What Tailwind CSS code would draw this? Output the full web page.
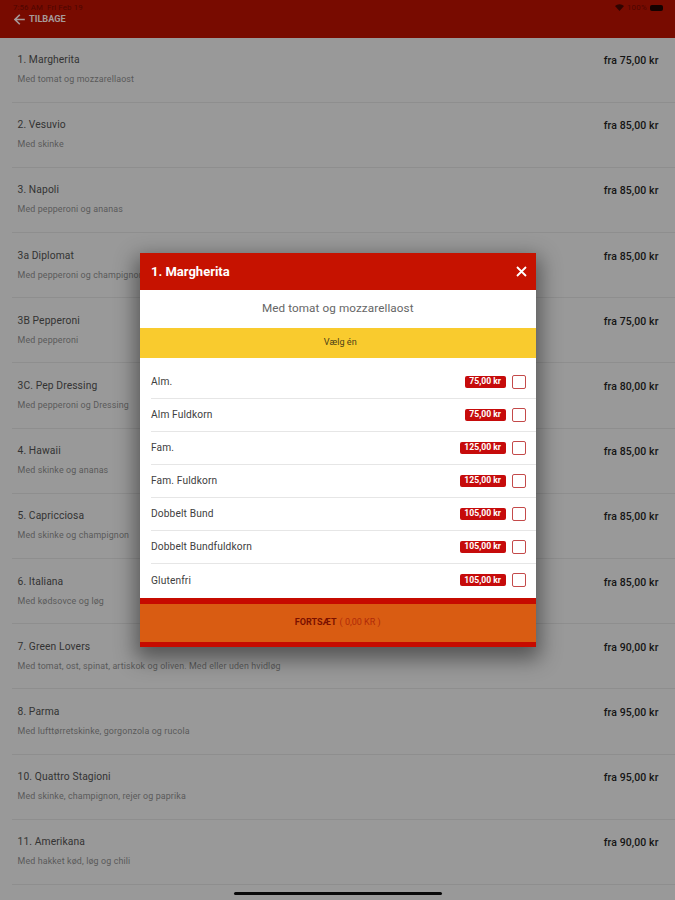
<!DOCTYPE html>
<html lang="da">
<head>
  <meta charset="UTF-8" />
  <meta name="viewport" content="width=device-width, initial-scale=1.0"/>
  <title>Menu - Margherita</title>
  <script src="https://cdn.jsdelivr.net/npm/@tailwindcss/browser@4"></script>
</head>
<body class="relative h-screen overflow-hidden bg-[#999999] font-[Roboto,sans-serif]">

  <header class="h-[37.5px] bg-[#780b00] pt-[3px]">
    <div class="flex h-[10px] items-center justify-between pl-[13px] pr-[12px] text-[7.8px] leading-none text-[#4d0600]">
      <span class="whitespace-pre tracking-[0.15px]">7:56 AM  Fri Feb 19</span>
      <div class="flex items-center gap-[3px]">
        <svg class="h-[7px] w-[9px]" viewBox="0 0 18 14" fill="#300400"><path d="M0 4a13 13 0 0 1 18 0L9 14z"/></svg>
        <span class="tracking-[0.3px]">100%</span>
        <span class="h-[6px] w-[13px] rounded-[2px] bg-[#140200]"></span>
      </div>
    </div>
    <button class="ml-[14px] flex h-[12px] items-center gap-[4px] text-[9.2px] font-bold leading-none text-[#a69a99]">
      <svg class="h-[11px] w-[11px]" viewBox="0 0 11 11" fill="none" stroke="currentColor" stroke-width="1.6"><path d="M10.8 5.5H1.2M5.8.7L1 5.5l4.8 4.8"/></svg>
      TILBAGE
    </button>
  </header>

  <main id="menu"></main>

  <div class="absolute left-[140px] top-[253px] flex h-[394px] w-[395.5px] flex-col bg-white shadow-[0_8px_20px_4px_rgba(0,0,0,0.45)]">
    <div class="flex h-[36.5px] shrink-0 items-center justify-between bg-[#c61200] pl-[11px] pr-[9px] text-white">
      <h2 class="text-[13px] font-bold">1. Margherita</h2>
      <svg class="h-[11px] w-[11px]" viewBox="0 0 11 11" fill="none" stroke="currentColor" stroke-width="1.8"><path d="M1 1l9 9M10 1l-9 9"/></svg>
    </div>
    <p class="flex h-[38px] shrink-0 items-center justify-center pt-[1px] text-[11.7px] tracking-[0.1px] text-[#666666]">Med tomat og mozzarellaost</p>
    <p class="flex h-[30px] shrink-0 items-center justify-center bg-[#f9cb2e] pl-[5px] text-[9.1px] text-[#4d4219]">Vælg én</p>
    <div id="options" class="min-h-0 flex-1 pl-[11px] pt-[8px]"></div>
    <button class="flex h-[49px] shrink-0 items-center justify-center gap-[3px] border-t-[6px] border-b-[5px] border-[#c60b00] bg-[#d95c12] text-[9px] text-[#b02a08]">
      <span class="font-bold text-[#7a1000]">FORTSÆT</span>
      <span>( 0,00 KR )</span>
    </button>
  </div>

  <div class="absolute bottom-[5px] left-[234px] h-[3.5px] w-[208px] rounded-full bg-[#080808]"></div>

  <script>
    const dishes = [
      ["1. Margherita", "Med tomat og mozzarellaost", "75,00"],
      ["2. Vesuvio", "Med skinke", "85,00"],
      ["3. Napoli", "Med pepperoni og ananas", "85,00"],
      ["3a Diplomat", "Med pepperoni og champignon", "85,00"],
      ["3B Pepperoni", "Med pepperoni", "75,00"],
      ["3C. Pep Dressing", "Med pepperoni og Dressing", "80,00"],
      ["4. Hawaii", "Med skinke og ananas", "85,00"],
      ["5. Capricciosa", "Med skinke og champignon", "85,00"],
      ["6. Italiana", "Med kødsovce og løg", "85,00"],
      ["7. Green Lovers", "Med tomat, ost, spinat, artiskok og oliven. Med eller uden hvidløg", "90,00"],
      ["8. Parma", "Med lufttørretskinke, gorgonzola og rucola", "95,00"],
      ["10. Quattro Stagioni", "Med skinke, champignon, rejer og paprika", "95,00"],
      ["11. Amerikana", "Med hakket kød, løg og chili", "90,00"]
    ];

    const sizes = [
      ["Alm.", "75,00"],
      ["Alm Fuldkorn", "75,00"],
      ["Fam.", "125,00"],
      ["Fam. Fuldkorn", "125,00"],
      ["Dobbelt Bund", "105,00"],
      ["Dobbelt Bundfuldkorn", "105,00"],
      ["Glutenfri", "105,00"]
    ];

    document.getElementById("menu").innerHTML = dishes.map(([name, text, price]) => `
      <div class="ml-[12px] flex h-[65.2px] justify-between border-b border-[#8e8e8e] pl-[5.5px] pr-[16.5px] pt-[15.5px]">
        <div>
          <h3 class="text-[10.3px] leading-[14px] tracking-[0.1px] text-[#333333]">${name}</h3>
          <p class="mt-[6px] text-[8.9px] leading-[12px] tracking-[0.13px] text-[#595959]">${text}</p>
        </div>
        <span class="pt-[1px] text-[10.5px] font-medium leading-[14px] tracking-[0.1px] text-[#141414]">fra ${price} kr</span>
      </div>`).join("");

    document.getElementById("options").innerHTML = sizes.map(([name, price]) => `
      <label class="flex h-[33px] items-center border-b border-[#e6e6e6] pr-[10px] text-[10.2px] text-[#404040] last:border-b-0">
        <span class="flex-1 pt-[1px] tracking-[0.13px]">${name}</span>
        <span class="mr-[6px] flex h-[12px] items-center rounded-[2px] bg-[#c60b0b] px-[4.5px] text-[8.6px] font-bold text-white">${price} kr</span>
        <span class="h-[14px] w-[14px] rounded-[2px] border-[1.5px] border-[#c44a4a]"></span>
      </label>`).join("");
  </script>
</body>
</html>
